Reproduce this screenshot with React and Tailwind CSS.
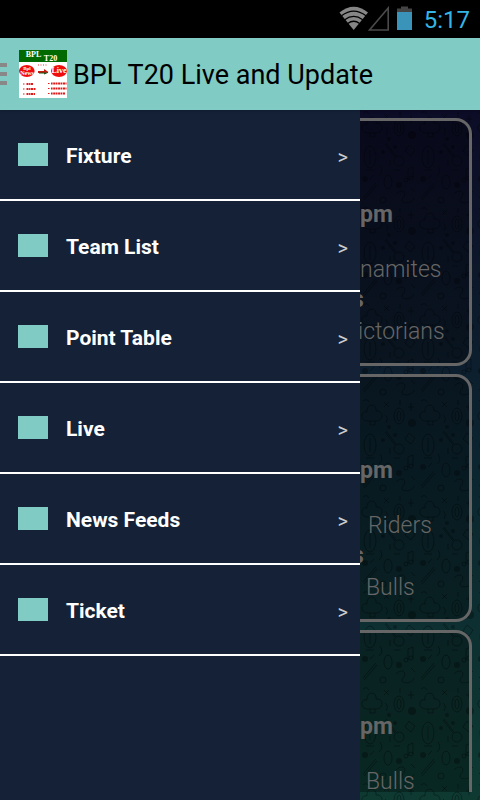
import React from 'react';

const menuItems = ['Fixture', 'Team List', 'Point Table', 'Live', 'News Feeds', 'Ticket'];

const matches = [
  { id: 1, time: 'pm', home: 'namites', away: 'ictorians', indent: '', awayIndent: '-ml-0.5' },
  { id: 2, time: 'pm', home: 'Riders', away: 'Bulls', indent: 'pl-2', awayIndent: 'pl-1.5' },
  { id: 3, time: 'pm', home: 'Bulls', indent: 'pl-1.5' },
];

function StatusBar() {
  return (
    <div className="flex h-[38px] shrink-0 items-center justify-end bg-black pr-[10px]">
      <svg width="30" height="26" viewBox="0 0 30 26" aria-hidden="true">
        <path d="M0.5 6.5 Q14.7 -5 29 6.5 L14.7 24 Z" fill="#868686" />
        <g fill="none" stroke="#000" strokeWidth="1.3">
          <path d="M2.5 9.8 Q14.7 0.5 27 9.8" />
          <path d="M5.7 13.7 Q14.7 7 23.7 13.7" />
          <path d="M8.8 17.5 Q14.7 13 20.6 17.5" />
        </g>
      </svg>
      <svg className="-ml-px" width="22" height="26" viewBox="0 0 22 26" aria-hidden="true">
        <path d="M1.5 24 H20.2 V2 Z" fill="none" stroke="#4a4a4a" strokeWidth="1.6" />
      </svg>
      <svg className="ml-1 mr-2" width="22" height="26" viewBox="0 0 22 26" aria-hidden="true">
        <path d="M7 0.5 H14 V2.5 H18 V6 H3 V2.5 H7 Z" fill="#444" />
        <path d="M3 6 H18 V24 H3 Z" fill="#3a94b9" />
      </svg>
      <span className="pt-0.5 text-2xl text-[#33b5e5]">5:17</span>
    </div>
  );
}

function Logo() {
  return (
    <svg className="ml-3 shrink-0" width="48" height="48" viewBox="0 0 48 48" aria-hidden="true">
      <rect width="48" height="48" fill="#fff" />
      <rect width="48" height="12" fill="#006a00" />
      <g fontFamily="Liberation Serif, serif" fontWeight="bold" textAnchor="middle" fill="#fff">
        <text x="14.5" y="7" fontSize="8">BPL</text>
        <text x="31.5" y="11" fontSize="8">T20</text>
      </g>
      <ellipse cx="7.8" cy="21" rx="7.8" ry="6" fill="#f00c0c" />
      <ellipse cx="40" cy="21" rx="8" ry="6" fill="#f00c0c" />
      <g fontFamily="Liberation Serif, serif" fontWeight="bold" textAnchor="middle" fill="#fff">
        <text x="8" y="20" fontSize="5">Bpl</text>
        <text x="8" y="25" fontSize="6">News</text>
        <text x="40" y="23" fontSize="8">Live</text>
      </g>
      <path d="M19 21 H25 V19 L29.5 22 L25 24 V23 H19 Z" fill="#c41a10" />
      <path d="M20 23 H26 M25 24 L29 22.4" stroke="#145214" strokeWidth="1" />
      <path d="M19 15 H28" stroke="#e33" strokeWidth="1" strokeDasharray="1 1.5" />
      {/* bullet lists */}
      <g fill="none" stroke="#e01818">
        <path strokeWidth="1.2" d="M4 34 h1.5 M4 39 h1.5 M4 44 h1.5 M29 33.500 h1.5 M29 38.500 h1.5 M29 43.500 h1.5" />
        <path strokeWidth="2" strokeDasharray="2 0.6 1.4 0.5" d="M7.5 34 H14 M7.5 39 H17 M7.5 44 H16" />
        <path strokeWidth="2" strokeDasharray="1.6 0.6 2.200 0.5" d="M32 33.500 H47.500 M32 38.500 H47.500 M32 43.500 H46" />
      </g>
    </svg>
  );
}

function Doodles() {
  return (
    <svg className="absolute inset-0 h-full w-full" aria-hidden="true">
      <defs>
        <pattern id="doodles" width="58" height="96" patternUnits="userSpaceOnUse">
          <g fill="none" stroke="#000" strokeOpacity="0.34" strokeWidth="1">
            <path d="M8 23 C-1 23 1 12 7 14 C6 5 17 5 16 13 C24 12 24 23 16 23 H8 M10 23 V27 H15 V23" />
            <ellipse cx="39" cy="18" rx="5" ry="8" />
            <ellipse cx="39" cy="18" rx="2" ry="5" />
            <path d="M25 34 L35 47 M26 33 L36 46" />
            <circle cx="39" cy="51" r="5" />
            <ellipse cx="10" cy="47" rx="6" ry="11" />
            <path d="M10 40 V54 M6 60 H14" />
            <path d="M49 35 L55 40 L51 46 L45 41 Z M48 59 V70 M53 57 V68 M48 59 L53 57" />
            <circle cx="46" cy="70" r="2" />
            <circle cx="51" cy="68" r="2" />
            <ellipse cx="28" cy="72" rx="4" ry="7" />
            <path d="M3 88 L16 73 M4 90 L17 75 M36 84 C42 78 48 82 43 88 S52 95 54 88" />
            <circle cx="23" cy="90" r="3" />
            <path d="M24 4 L29 9 M29 4 L24 9 M51 5 V13 M48 9 H54 M20 56 Q24 62 19 66" />
            <path d="M3 3 Q7 0 9 4 M40 2 V7 M25 17 Q29 20 26 25 M51 78 L55 82 M10 69 L14 65 M34 60 H40 M30 50 V56" />
          </g>
          <g fill="#000" fillOpacity="0.3">
            <circle cx="52" cy="25" r="4" />
            <circle cx="23" cy="42" r="2" />
            <circle cx="35" cy="37" r="2" />
            <circle cx="5" cy="69" r="3" />
            <circle cx="39" cy="75" r="3" />
            <circle cx="29" cy="29" r="2" />
          </g>
        </pattern>
      </defs>
      <rect width="100%" height="100%" fill="url(#doodles)" />
    </svg>
  );
}

function MatchCard({ match }) {
  return (
    <article className="h-[248px] shrink-0 rounded-r-2xl border-y-[3px] border-r-[3px] border-[#666] bg-black/30 pt-[78px] text-[23px] text-[#666]">
      <p className="h-8 font-bold leading-8">{match.time}</p>
      <p className={`mt-6 pt-px font-light leading-7 ${match.indent}`}>{match.home}</p>
      {match.away && (
        <>
          <p className="-ml-2 mt-1 font-bold leading-6">s</p>
          <p className={`mt-1.5 font-light leading-7 ${match.awayIndent}`}>{match.away}</p>
        </>
      )}
    </article>
  );
}

function App() {
  return (
    <div className="flex h-screen flex-col overflow-hidden font-[Roboto,sans-serif]">
      <StatusBar />

      <header className="relative z-10 flex h-[72px] shrink-0 items-center bg-[#80cbc4] shadow-sm">
        <button type="button" aria-label="Menu" className="flex flex-col gap-[5px]">
          <span className="h-1 w-[7px] bg-[#888]" />
          <span className="h-1 w-[7px] bg-[#888]" />
          <span className="h-1 w-[7px] bg-[#888]" />
        </button>
        <Logo />
        <h1 className="ml-[6px] whitespace-nowrap pt-0.5 text-[27px] text-black">BPL T20 Live and Update</h1>
      </header>

      <div className="flex min-h-0 flex-1">
        {/* Drawer */}
        <nav className="w-3/4 bg-[#142136]">
          <ul>
            {menuItems.map((item) => (
              <li key={item} className="border-b-2 border-white">
                <a href="#" className="flex h-[89px] items-center pl-[18px] pr-3">
                  <span className="h-[23px] w-[30px] bg-[#80cbc4]" />
                  <span className="ml-[18px] flex-1 pt-1 text-[21px] font-bold text-white">{item}</span>
                  <span className="pt-1 text-xl text-[#ccc]">&gt;</span>
                </a>
              </li>
            ))}
          </ul>
        </nav>

        {/* Fixtures under the dimmed overlay */}
        <main className="relative flex-1 overflow-hidden bg-linear-to-b from-[#0c0c26] via-[#0c2530] to-[#0e3a32] py-2 pr-2">
          <Doodles />
          <div className="relative flex h-full flex-col gap-2 overflow-hidden">
            {matches.map((match) => (
              <MatchCard key={match.id} match={match} />
            ))}
          </div>
        </main>
      </div>
    </div>
  );
}

export default App;
